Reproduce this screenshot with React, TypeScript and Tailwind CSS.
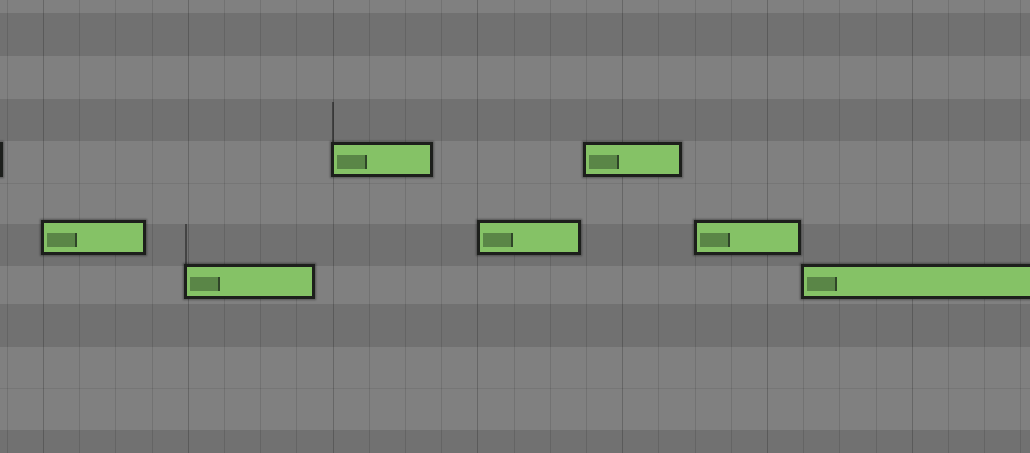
import React from 'react';

// key lanes from top to bottom; "split" marks a white/white boundary (E-F, B-C)
const lanes = [
    { h: 13, black: false, split: false },
    { h: 43, black: true, split: false },
    { h: 43, black: false, split: false },
    { h: 42, black: true, split: false },
    { h: 42, black: false, split: false },
    { h: 41, black: false, split: true },
    { h: 42, black: true, split: false },
    { h: 38, black: false, split: false },
    { h: 43, black: true, split: false },
    { h: 41, black: false, split: false },
    { h: 42, black: false, split: true },
    { h: 23, black: true, split: false },
];

const notes = [
    { x: -100, y: 142, w: 103, marker: false },
    { x: 41, y: 220, w: 105, marker: false },
    { x: 184, y: 264, w: 131, marker: true },
    { x: 331, y: 142, w: 102, marker: true },
    { x: 477, y: 220, w: 104, marker: false },
    { x: 583, y: 142, w: 99, marker: false },
    { x: 694, y: 220, w: 107, marker: false },
    { x: 801, y: 264, w: 260, marker: false },
];

const Note: React.FC<{ x: number; y: number; w: number; marker: boolean }> = ({ x, y, w, marker }) => (
    <>
        {marker && (
            <div
                className="absolute w-[2px] h-[40px] bg-[rgba(30,30,30,0.55)]"
                style={{ left: x + 1, top: y - 40 }}
            />
        )}
        <div
            className="absolute h-[35px] bg-[#85c266] border-[3px] border-[#1d1f1c] shadow-[0_0_2px_1px_rgba(0,0,0,0.35)]"
            style={{ left: x, top: y, width: w }}
        >
            <div className="ml-[3px] mt-[10px] w-[30px] h-[14px] bg-[#5a8647] border-r-2 border-[#2f4528]" />
        </div>
    </>
);

const PianoRoll: React.FC = () => {
    const gridLines = Array.from({ length: 29 }, (_, i) => i);

    return (
        <div className="relative w-[1030px] h-[453px] overflow-hidden bg-[#808080]">
            {/* lanes */}
            <div className="flex flex-col">
                {lanes.map((l, i) => (
                    <div
                        key={i}
                        className={`shrink-0 ${l.black ? 'bg-[#717171]' : 'bg-[#808080]'} ${l.split ? 'border-t border-[#767676]' : ''}`}
                        style={{ height: l.h }}
                    />
                ))}
            </div>

            {/* 16th grid, darker every beat */}
            <div className="absolute inset-0 flex pl-[6.8px]">
                {gridLines.map((i) => (
                    <div
                        key={i}
                        className={`shrink-0 w-[36.21px] h-full border-l ${
                            i % 4 === 1 ? 'border-[rgba(0,0,0,0.2)]' : 'border-[rgba(0,0,0,0.11)]'
                        }`}
                    />
                ))}
            </div>

            {notes.map((n, i) => (
                <Note key={i} {...n} />
            ))}
        </div>
    );
};

export default function App() {
    return <PianoRoll />;
}
